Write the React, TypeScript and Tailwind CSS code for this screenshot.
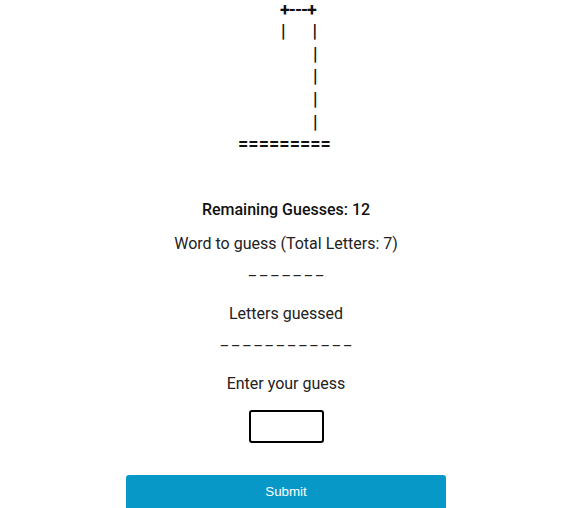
import React, { useState } from 'react';

const Pipe = ({ className = '' }: { className?: string }) => (
  <span className={`inline-block ${className}`}>|</span>
);

const Gallows: React.FC = () => {
  return (
    <div className="w-[94px] mx-auto font-['Roboto',sans-serif] text-[18px] leading-[22.67px] font-bold text-[#111] whitespace-pre">
      <div className="pl-[41px] tracking-[-1px] leading-[20px]">+---+</div>
      <div className="flex">
        <Pipe className="ml-[42px]" />
        <Pipe className="ml-[27px]" />
      </div>
      {[0, 1, 2, 3].map((i) => (
        <div key={i} className="flex">
          <Pipe className="ml-[74px]" />
        </div>
      ))}
      <div className="-ml-[1px]">=========</div>
    </div>
  );
};

const App: React.FC = () => {
  const [guess, setGuess] = useState('');
  const remaining = 12;
  const wordLength = 7;
  const guessed = Array(12).fill('_').join(' ');

  return (
    <div className="min-h-screen bg-white font-['Roboto',sans-serif] text-[#222]">
      <Gallows />

      <div className="flex flex-col items-center text-[16px] leading-6">
        <p className="mt-[42px] font-medium text-[#111]">Remaining Guesses: {remaining}</p>
        <p className="mt-[10px]">Word to guess (Total Letters: {wordLength})</p>
        <p className="mt-[2px]">{Array(wordLength).fill('_').join(' ')}</p>
        <p className="mt-[20px]">Letters guessed</p>
        <p className="mt-[2px]">{guessed}</p>
        <p className="mt-[20px]">Enter your guess</p>
        <input
          autoFocus
          value={guess}
          onChange={(e) => setGuess(e.target.value)}
          className="mt-[14px] w-[75px] h-[33px] border-2 border-black rounded-[3px] px-1 outline-none caret-black"
        />
        <button className="mt-[32px] w-[320px] h-[40px] bg-[#0798c8] rounded-[3px] text-white text-[13.33px] font-['Liberation_Sans',Arial,sans-serif] pb-[6px]">
          Submit
        </button>
      </div>
    </div>
  );
};

export default App;
